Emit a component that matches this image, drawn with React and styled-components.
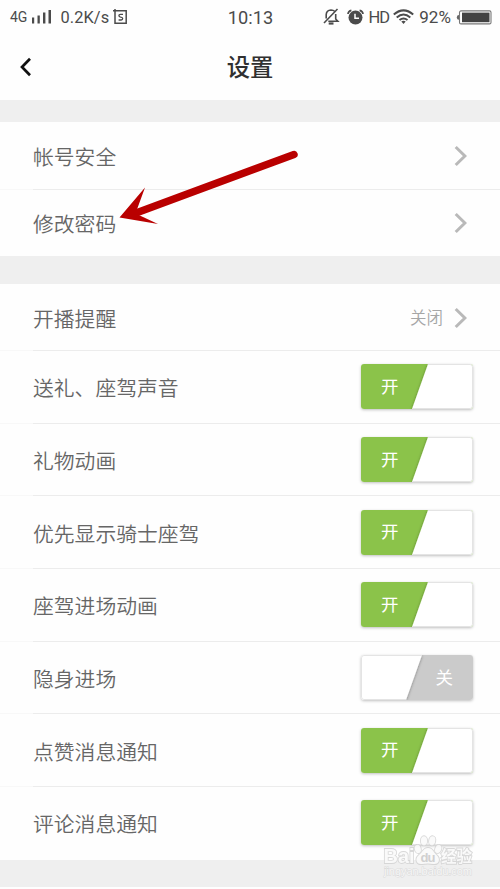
import React from "react";
import styled, { createGlobalStyle } from "styled-components";

const GlobalStyle = createGlobalStyle`
  * { box-sizing: border-box; }
  body { margin: 0; background: #fefefe; }
`;

const Screen = styled.main`
  position: relative;
  width: 500px;
  height: 889px;
  overflow: hidden;
  display: flex;
  flex-direction: column;
  background: #fefefe;
  color: #666;
  font-family: "Noto Sans CJK SC", sans-serif;
`;

const StatusBar = styled.header`
  height: 34px;
  flex: none;
  display: grid;
  grid-template-columns: 1fr auto 1fr;
  align-items: center;
  padding: 0 8px 0 10px;
  color: #4b4b4b;
  font: 17px/33px Roboto, sans-serif;
`;

const StatusGroup = styled.div`
  display: flex;
  align-items: center;
  justify-content: ${(p) => (p.$end ? "flex-end" : "flex-start")};
  svg { display: block; flex: none; }
`;

const StatusText = styled.span`
  font-size: ${(p) => p.$size || 17}px;
  letter-spacing: ${(p) => p.$spacing || 0}px;
  margin: 0 ${(p) => p.$right || 0}px 0 ${(p) => p.$left || 0}px;
  white-space: nowrap;
`;

const StatusIcons = styled.div`
  display: flex;
  align-items: center;
  gap: 7px;
`;

const Clock = styled(StatusText)`
  margin: 0 1px 0 0;
`;

const TitleBar = styled.nav`
  height: 66px;
  flex: none;
  display: grid;
  grid-template-columns: 60px 1fr 60px;
  align-items: center;
  color: #303030;
`;

const BackButton = styled.button`
  border: 0;
  padding: 0 0 0 18px;
  background: none;
  display: flex;
`;

const Title = styled.h1`
  margin: 0 0 2px;
  text-align: center;
  font-size: 23.3px;
  line-height: 34px;
  font-weight: 500;
`;

const Gap = styled.div`
  flex: none;
  height: ${(p) => p.$height}px;
  background: #efefef;
`;

const Group = styled.section`
  flex: none;
  display: flex;
  flex-direction: column;
`;

const Row = styled.div`
  height: ${(p) => p.$height}px;
  display: flex;
  align-items: center;
  justify-content: space-between;
  padding: 0 ${(p) => (p.$toggle ? 27 : 33)}px 0 33px;
  background: ${(p) =>
    p.$last
      ? "none"
      : "linear-gradient(90deg, #f8f8f8 33px, #ececec 33px) bottom / 100% 1px no-repeat"};
`;

const Label = styled.span`
  font-size: 20.8px;
  line-height: 30px;
  font-weight: 350;
  color: #666;
`;

const Trailing = styled.div`
  display: flex;
  align-items: center;
  gap: 11px;
  svg { display: block; }
`;

const Value = styled.span`
  font-size: 16.5px;
  line-height: 24px;
  font-weight: 350;
  color: #a6a6a6;
  padding-bottom: 1px;
`;

const Switch = styled.button`
  width: 112px;
  height: 45px;
  padding: 0;
  border: 0;
  border-radius: 3px;
  display: grid;
  margin-bottom: 1px;
  background: #fff;
  box-shadow: 0 1px 3px rgba(0, 0, 0, 0.25);
  > * { grid-area: 1 / 1; }
  svg { display: block; border-radius: 3px; }
`;

const SwitchText = styled.span`
  align-self: center;
  justify-self: ${(p) => (p.$on ? "start" : "end")};
  margin: 0 20px 2px;
  z-index: 1;
  color: #fff;
  font: 400 17.5px/24px "Noto Sans CJK SC", sans-serif;
`;

const Arrow = styled.svg`
  position: absolute;
  left: 116px;
  top: 145px;
`;

const Watermark = styled.svg`
  position: absolute;
  left: 378px;
  top: 832px;
`;

const Chevron = () => (
  <svg width="13" height="22" viewBox="0 0 13 22" fill="none">
    <path d="M1.7 2 L10.9 11 L1.7 20" stroke="#b9b9b9" strokeWidth="3" />
  </svg>
);

function Toggle({ on }) {
  return (
    <Switch role="switch" aria-checked={on}>
      <svg width="112" height="45" viewBox="0 0 112 45">
        <defs>
          <filter id="edge" x="-20%" y="-20%" width="140%" height="140%">
            <feDropShadow dx="0" dy="0.5" stdDeviation="1.5" floodOpacity="0.4" />
          </filter>
        </defs>
        <rect width="112" height="45" fill={on ? "#8bc34a" : "#cbcbcb"} />
        <path
          d={on ? "M67 0 H112 V45 H51 Z" : "M0 0 H61 L45 45 H0 Z"}
          fill="#fff"
          filter="url(#edge)"
        />
        <path
          d={on ? "M67 .5 H109 Q111.5 .5 111.5 3 V42 Q111.5 44.5 109 44.5 H51" : "M61 .5 H3 Q.5 .5 .5 3 V42 Q.5 44.5 3 44.5 H45"}
          fill="none"
          stroke="#e4e4e4"
        />
      </svg>
      <SwitchText $on={on}>{on ? "开" : "关"}</SwitchText>
    </Switch>
  );
}

const Signal = () => (
  <svg width="21" height="16" viewBox="0 0 21 16" fill="#4b4b4b">
    <rect x="1" y="8.5" width="2.2" height="6" />
    <rect x="6.5" y="6.5" width="2.3" height="8" />
    <rect x="12" y="3.5" width="2.4" height="11" />
    <rect x="17.5" y="1" width="2.5" height="13.5" />
  </svg>
);

const AppBadge = () => (
  <svg width="15" height="16" viewBox="0 0 15 16" fill="none" stroke="#4b4b4b">
    <path d="M0 1.8 H13.2 V14.2 H2 V0" strokeWidth="1.5" />
    <path d="M10 5.3 H7.4 Q5.9 5.3 5.9 6.6 Q5.9 7.9 7.6 8.1 Q9.7 8.3 9.7 9.6 Q9.7 11 8.2 11 H5.6" strokeWidth="1.3" />
  </svg>
);

const MutedBell = () => (
  <svg width="17" height="18" viewBox="0 0 17 18" fill="none" stroke="#4b4b4b" strokeWidth="1.6">
    <path d="M3.2 10.5 V6.5 Q3.5 2.3 8 2 Q10.2 2 12 3.5 M12.7 6 V11 L14.8 13.2 H5.3" />
    <path d="M1 15 L14.5 1" />
    <path d="M5.7 15.5 H10.5" strokeWidth="2.2" />
  </svg>
);

const Alarm = () => (
  <svg width="17" height="17" viewBox="0 0 17 17" fill="none">
    <circle cx="8.5" cy="8.6" r="7" fill="#4b4b4b" />
    <path d="M1 5 Q1.3 2 4.4 1.4 M12.6 1.4 Q15.7 2 16 5" stroke="#4b4b4b" strokeWidth="1.7" />
    <path d="M8 4.8 V9.3 H12" stroke="#fff" strokeWidth="1.5" />
  </svg>
);

const Wifi = () => (
  <svg width="21" height="16" viewBox="0 0 21 16" fill="none" stroke="#4b4b4b" strokeWidth="2">
    <path d="M.8 5.5 Q10.5 -2.8 20.2 5.5 M3.7 8.4 Q10.5 2.7 17.3 8.4 M6.5 11 Q10.5 8 14.5 11" />
    <path d="M8.3 12.5 Q10.5 11.1 12.7 12.5 L10.5 15 Z" fill="#4b4b4b" stroke="none" />
  </svg>
);

const Battery = () => (
  <svg width="36" height="15" viewBox="0 0 36 15" fill="none">
    <rect x="3.5" y=".9" width="31.5" height="13" rx="1.5" stroke="#777" strokeWidth="1.1" />
    <path d="M3 5 Q.8 5 .8 7.4 Q.8 9.8 3 9.8" fill="#666" />
    <rect x="6" y="2.6" width="27.5" height="9.6" fill="#434343" />
  </svg>
);

const settings = [
  ["送礼、座驾声音", true],
  ["礼物动画", true],
  ["优先显示骑士座驾", true],
  ["座驾进场动画", true],
  ["隐身进场", false],
  ["点赞消息通知", true],
  ["评论消息通知", true],
];

export default function App() {
  return (
    <>
      <GlobalStyle />
      <Screen>
        <StatusBar>
          <StatusGroup>
            <StatusText $size={14} $right={4}>4G</StatusText>
            <Signal />
            <StatusText $size={16.4} $spacing={0.1} $left={8} $right={4}>0.2K/s</StatusText>
            <AppBadge />
          </StatusGroup>
          <Clock $size={18.2}>10:13</Clock>
          <StatusGroup $end>
            <StatusIcons>
              <MutedBell />
              <Alarm />
            </StatusIcons>
            <StatusText $size={16.5} $spacing={-1} $left={5} $right={4}>HD</StatusText>
            <Wifi />
            <StatusText $size={17} $spacing={0.1} $left={5} $right={5}>92%</StatusText>
            <Battery />
          </StatusGroup>
        </StatusBar>
        <TitleBar>
          <BackButton aria-label="返回">
            <svg width="16" height="22" viewBox="0 0 16 22" fill="none">
              <path d="M12 2.7 L4 11 L12 19.2" stroke="#111" strokeWidth="2.7" />
            </svg>
          </BackButton>
          <Title>设置</Title>
        </TitleBar>
        <Gap $height={22} />
        <Group>
          <Row $height={67.5}><Label>帐号安全</Label><Chevron /></Row>
          <Row $height={66.5} $last><Label>修改密码</Label><Chevron /></Row>
        </Group>
        <Gap $height={28} />
        <Group>
          <Row $height={67}>
            <Label>开播提醒</Label>
            <Trailing><Value>关闭</Value><Chevron /></Trailing>
          </Row>
          {settings.map(([label, on], i) => (
            <Row key={label} $height={72.7} $toggle $last={i === settings.length - 1}>
              <Label>{label}</Label>
              <Toggle on={on} />
            </Row>
          ))}
        </Group>
        <Gap $height={27.1} />
        <Arrow width="184" height="84" viewBox="0 0 184 84">
          <path d="M178 9.5 L20 68" stroke="#b90000" strokeWidth="7.5" strokeLinecap="round" />
          <path d="M3.5 72.5 L29 42.5 L19.5 68.5 L42 79 Z" fill="#b90000" />
        </Arrow>
        <Watermark width="104" height="52" viewBox="0 0 104 52">
          <g fill="#fafafa" stroke="#d2d2d2" strokeWidth="1.8" paintOrder="stroke" opacity=".85">
            <text x="5.5" y="31" fontFamily="Liberation Sans, sans-serif" fontWeight="700" fontSize="20.5" textLength="31" lengthAdjust="spacingAndGlyphs">Bai</text>
            <text x="63" y="30" fontFamily="Noto Sans CJK SC, sans-serif" fontWeight="700" fontSize="15.5" textLength="31">经验</text>
            <ellipse cx="39.8" cy="17" rx="3" ry="4.2" transform="rotate(-15 39.8 17)" />
            <ellipse cx="46" cy="8.8" rx="3.1" ry="4.6" />
            <ellipse cx="54.2" cy="8.8" rx="3.1" ry="4.6" transform="rotate(10 54.2 8.8)" />
            <ellipse cx="60.2" cy="17" rx="3" ry="4.2" transform="rotate(20 60.2 17)" />
            <path d="M50 16 C45 16 45 20 41 23 C36 27 39 33 44 32 Q50 31 55 32 C61 33 63 27 58.5 23 C55 20 55 16 50 16Z" />
          </g>
          <text x="42.5" y="30" fontFamily="Liberation Sans, sans-serif" fontWeight="700" fontSize="13" fill="#d0d0d0" textLength="15">du</text>
          <text x="6" y="43" fontFamily="Liberation Sans, sans-serif" fontSize="11" fill="#f7f7f7" stroke="#dadada" strokeWidth="1" paintOrder="stroke" textLength="88">jingyan.baidu.com</text>
        </Watermark>
      </Screen>
    </>
  );
}
